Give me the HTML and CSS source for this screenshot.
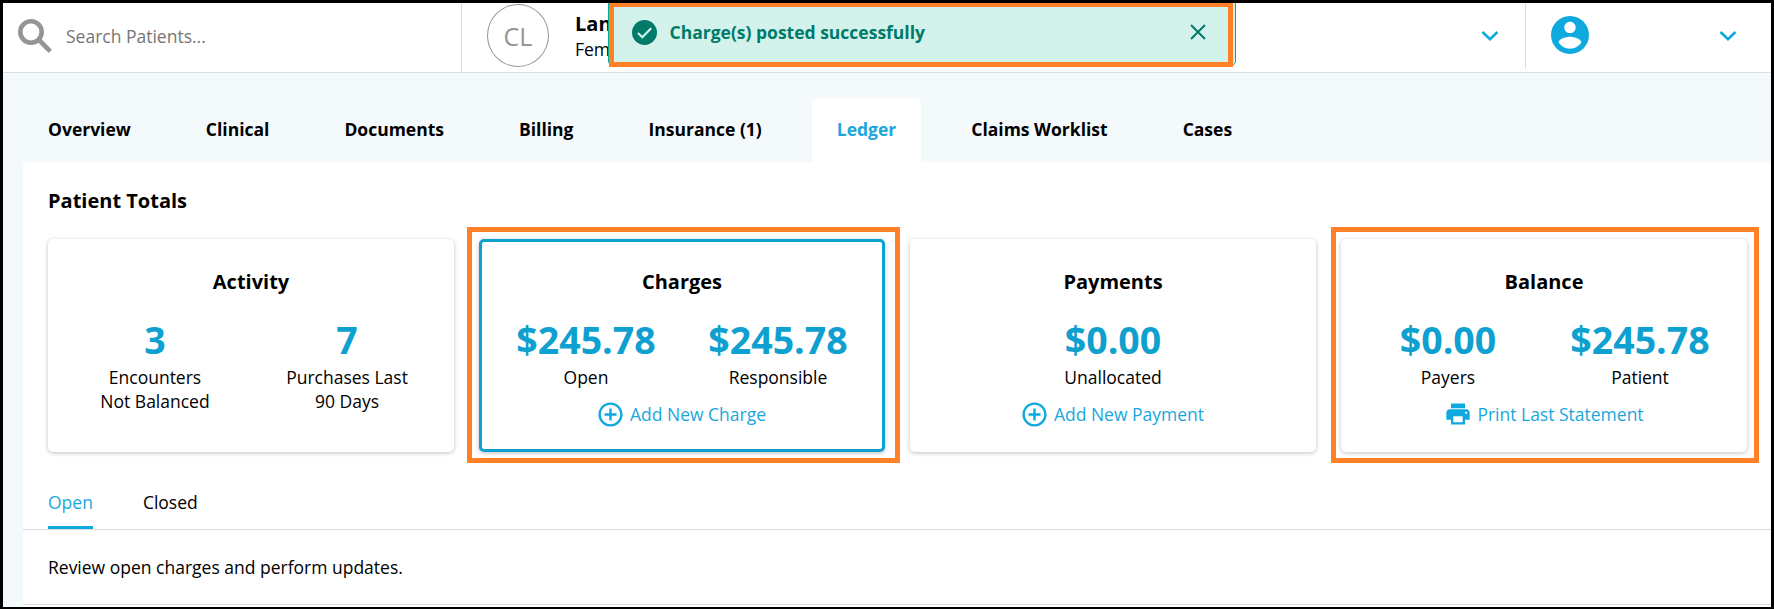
FILE: index.html
```html
<!DOCTYPE html>
<html lang="en">
<head>
<meta charset="utf-8">
<title>Patient Ledger</title>
<link rel="stylesheet" href="styles.css">
</head>
<body>
<div class="app">
  <header class="header">
    <div class="search">
      <svg class="search-icon" viewBox="0 0 34 34"><circle cx="13" cy="13" r="10.7"/><path d="M20.5 20.5L32.3 32.3"/></svg>
      <span>Search Patients...</span>
    </div>
    <div class="patient">
      <div class="initials">CL</div>
      <div class="patient-info"><strong>Lan</strong><span>Fem</span></div>
      <svg class="chevron" viewBox="0 0 18 12"><path d="M1.5 2L9 9.3L16.5 2"/></svg>
    </div>
    <div class="account">
      <svg class="avatar" viewBox="2 2 20 20"><path d="M12 2C6.48 2 2 6.48 2 12s4.48 10 10 10 10-4.48 10-10S17.52 2 12 2zm0 3c1.66 0 3 1.34 3 3s-1.34 3-3 3-3-1.34-3-3 1.34-3 3-3zm0 14.2c-2.5 0-4.71-1.28-6-3.22.03-1.99 4-3.08 6-3.08 1.99 0 5.97 1.09 6 3.08-1.29 1.94-3.5 3.22-6 3.22z"/></svg>
      <svg class="chevron" viewBox="0 0 18 12"><path d="M1.5 2L9 9.3L16.5 2"/></svg>
    </div>
  </header>

  <div class="toast">
    <svg class="toast-check" viewBox="0 0 25 25"><circle cx="12.5" cy="12.5" r="12.5"/><path d="M6 13L10.3 17.2L19.2 8.2"/></svg>
    <span>Charge(s) posted successfully</span>
    <svg class="toast-close" viewBox="0 0 16 16"><path d="M1 1L15 15M15 1L1 15"/></svg>
  </div>
  <div class="highlight highlight-toast"></div>

  <nav class="tabs">
    <a class="tab">Overview</a>
    <a class="tab">Clinical</a>
    <a class="tab">Documents</a>
    <a class="tab">Billing</a>
    <a class="tab">Insurance (1)</a>
    <a class="tab tab-active">Ledger</a>
    <a class="tab">Claims Worklist</a>
    <a class="tab">Cases</a>
  </nav>

  <main class="panel">
    <h2 class="panel-title">Patient Totals</h2>
    <div class="cards">
      <section class="card">
        <h3 class="card-title">Activity</h3>
        <div class="stats">
          <div class="stat"><b>3</b><span>Encounters<br>Not Balanced</span></div>
          <div class="stat"><b>7</b><span>Purchases Last<br>90 Days</span></div>
        </div>
      </section>
      <section class="card card-selected">
        <h3 class="card-title">Charges</h3>
        <div class="stats">
          <div class="stat"><b>$245.78</b><span>Open</span></div>
          <div class="stat"><b>$245.78</b><span>Responsible</span></div>
        </div>
        <a class="action"><svg class="icon-add" viewBox="0 0 24 24"><path d="M13 7h-2v4H7v2h4v4h2v-4h4v-2h-4V7zm-1-5C6.48 2 2 6.48 2 12s4.48 10 10 10 10-4.48 10-10S17.52 2 12 2zm0 18c-4.41 0-8-3.59-8-8s3.59-8 8-8 8 3.59 8 8-3.59 8-8 8z"/></svg>Add New Charge</a>
        <div class="highlight highlight-charges"></div>
      </section>
      <section class="card">
        <h3 class="card-title">Payments</h3>
        <div class="stats">
          <div class="stat"><b>$0.00</b><span>Unallocated</span></div>
        </div>
        <a class="action"><svg class="icon-add" viewBox="0 0 24 24"><path d="M13 7h-2v4H7v2h4v4h2v-4h4v-2h-4V7zm-1-5C6.48 2 2 6.48 2 12s4.48 10 10 10 10-4.48 10-10S17.52 2 12 2zm0 18c-4.41 0-8-3.59-8-8s3.59-8 8-8 8 3.59 8 8-3.59 8-8 8z"/></svg>Add New Payment</a>
      </section>
      <section class="card">
        <h3 class="card-title">Balance</h3>
        <div class="stats">
          <div class="stat"><b>$0.00</b><span>Payers</span></div>
          <div class="stat"><b>$245.78</b><span>Patient</span></div>
        </div>
        <a class="action"><svg class="icon-print" viewBox="0 0 24 24"><path d="M19 8H5c-1.66 0-3 1.34-3 3v6h4v4h12v-4h4v-6c0-1.66-1.34-3-3-3zm-3 11H8v-5h8v5zm3-7c-.55 0-1-.45-1-1s.45-1 1-1 1 .45 1 1-.45 1-1 1zm-1-9H6v4h12V3z"/></svg>Print Last Statement</a>
        <div class="highlight highlight-balance"></div>
      </section>
    </div>
    <nav class="subtabs">
      <a class="subtab subtab-active">Open</a>
      <a class="subtab">Closed</a>
    </nav>
    <p class="hint">Review open charges and perform updates.</p>
  </main>
</div>
</body>
</html>
```
FILE: styles.css
```css
* { box-sizing: border-box; }
body {
  margin: 0;
  font-family: "Open Sans", sans-serif;
  font-size: 17.5px;
  color: #000;
}
.app {
  position: relative;
  display: flex;
  flex-direction: column;
  width: 1774px;
  height: 609px;
  border: 3px solid #000;
  border-bottom-width: 2px;
  background: #f4f9fc;
  overflow: hidden;
}

/* Header */
.header {
  display: flex;
  flex: none;
  height: 70px;
  background: #fff;
  border-bottom: 1px solid #d9dee0;
}
.search {
  display: flex;
  align-items: center;
  gap: 14px;
  width: 459px;
  padding: 0 0 4px 15px;
  border-right: 1px solid #dcdfe0;
  color: #757575;
}
.search-icon {
  width: 34px;
  height: 34px;
  margin-top: 0;
  fill: none;
  stroke: #959595;
  stroke-width: 4.6;
}
.patient {
  display: flex;
  flex: 1;
  height: 66px;
  padding: 1px 26px 0 25px;
  border-right: 1px solid #dcdfe0;
}
.initials {
  width: 62px;
  height: 63px;
  border: 1px solid #959595;
  border-radius: 50%;
  color: #959595;
  font-size: 25px;
  line-height: 63px;
  text-align: center;
}
.patient-info {
  display: flex;
  flex-direction: column;
  margin-left: 26px;
  padding-top: 6px;
}
.patient-info strong {
  font-size: 20px;
  font-weight: 700;
  line-height: 27px;
}
.patient-info span { line-height: 24px; }
.chevron {
  width: 18px;
  height: 12px;
  margin: 26px 0 0 auto;
  fill: none;
  stroke: #0ea9de;
  stroke-width: 2.6;
}
.account {
  display: flex;
  width: 245px;
  padding: 1px 34px 0 25px;
}
.avatar {
  width: 38px;
  height: 38px;
  margin: 12px 0 0 -0.5px;
  fill: #0ea9de;
}

/* Notification laid over the header */
.toast {
  position: absolute;
  left: 605px;
  top: -5px;
  display: flex;
  align-items: center;
  width: 628px;
  height: 68px;
  padding: 0 29px 0 23px;
  border: 1px solid #00b096;
  border-radius: 5px;
  background: #d3f2ec;
  color: #007a69;
  font-weight: 700;
}
.toast-check {
  width: 25px;
  height: 25px;
  margin-right: 12.5px;
  fill: #007a69;
}
.toast-check path {
  fill: none;
  stroke: #d3f2ec;
  stroke-width: 2.2;
}
.toast-close {
  width: 16px;
  height: 16px;
  margin-left: auto;
  fill: none;
  stroke: #007a69;
  stroke-width: 2;
}

/* Orange call-out frames */
.highlight {
  position: absolute;
  border: 5px solid #ff8027;
}
.highlight-toast {
  left: 606px;
  top: -1px;
  width: 624px;
  height: 65px;
}
.highlight-charges { inset: -15px -18px -14px -15px; }
.highlight-balance { inset: -12px -12px -11px -10px; }

/* Main tabs */
.tabs {
  display: flex;
  gap: 25px;
  height: 89px;
  padding: 25px 0 0 20px;
}
.tab {
  padding: 0 25px;
  font-weight: 700;
  line-height: 63px;
}
.tab-active {
  border-radius: 6px 6px 0 0;
  background: #fff;
  color: #1ba7dd;
}

/* Ledger panel */
.panel {
  flex: 1;
  margin-left: 20px;
  background: #fff;
}
.panel-title {
  margin: 0;
  padding: 25px 25px 0;
  font-size: 20px;
  font-weight: 700;
  line-height: 28px;
}
.cards {
  display: grid;
  grid-template-columns: repeat(4, 1fr);
  gap: 25px;
  padding: 24px 24px 0 25px;
}
.card {
  position: relative;
  display: flex;
  flex-direction: column;
  align-items: center;
  height: 213px;
  padding-top: 28px;
  border-radius: 5px;
  background: #fff;
  box-shadow: 0 1px 4px rgba(0, 0, 0, 0.25);
}
.card-selected {
  padding-top: 25px;
  border: 3px solid #0ea0cf;
}
.card-title {
  margin: 0;
  font-size: 20px;
  font-weight: 700;
  line-height: 30px;
}
.stats {
  display: flex;
  margin-top: 18px;
}
.stat {
  display: flex;
  flex-direction: column;
  width: 192px;
  text-align: center;
}
.stat b {
  color: #0ea0cf;
  font-size: 37.5px;
  line-height: 50px;
}
.stat span { line-height: 24px; }
.action {
  display: flex;
  align-items: center;
  height: 30px;
  margin-top: 10px;
  color: #1ba7dd;
}
.icon-add, .icon-print {
  width: 29px;
  height: 29px;
  margin-right: 5px;
  fill: #0ea9de;
}
.icon-add { margin-left: -2px; }
.icon-print { width: 28px; height: 28px; }

/* Charge status tabs */
.subtabs {
  display: flex;
  gap: 50px;
  height: 78px;
  padding: 33px 25px 0;
  border-bottom: 1px solid #dcdddd;
}
.subtab { line-height: 34px; }
.subtab-active {
  height: 44px;
  border-bottom: 3px solid #0ea9de;
  color: #1ba7dd;
}
.hint {
  height: 75px;
  margin: 0;
  padding-left: 25px;
  border-bottom: 1px solid #dcdddd;
  line-height: 74px;
}
```
